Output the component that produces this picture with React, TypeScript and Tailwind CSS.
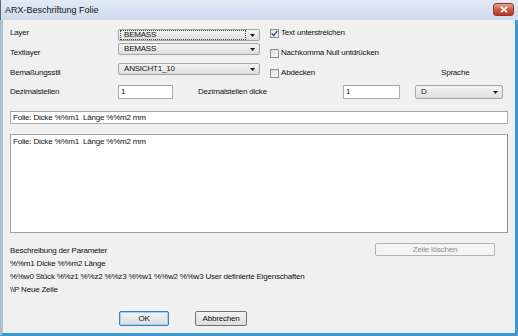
import React from "react";

const Arrow = () => (
  <svg width="5" height="3" viewBox="0 0 5 3" className="shrink-0">
    <path d="M0 0h5L2.5 3z" fill="#1b1b1b" />
  </svg>
);

const Combo = ({ value, className = "", focus = false }: { value: string; className?: string; focus?: boolean }) => (
  <div
    className={
      "flex items-center rounded-[2px] border border-[#a5a5a5] bg-gradient-to-b from-[#f4f4f4] to-[#dedede] pl-[1px] pr-[4px] " +
      className
    }
  >
    <span
      className={
        "flex h-full flex-1 items-center pl-[3px] mr-[4px] " +
        (focus ? "border border-dotted border-[#444]" : "border border-transparent")
      }
    >
      {value}
    </span>
    <Arrow />
  </div>
);

const Check = ({ checked = false, label }: { checked?: boolean; label: string }) => (
  <div className="flex h-5 items-center">
    <div className="flex h-[9px] w-[9px] items-center justify-center border border-[#8e8f8f] bg-gradient-to-br from-[#dcdcdc] to-[#fbfbfb]">
      {checked && (
        <svg width="7" height="7" viewBox="0 0 7 7">
          <path d="M0.8 3.6 L2.7 5.6 L6.3 0.8" stroke="#3d5a9a" strokeWidth="1.4" fill="none" />
        </svg>
      )}
    </div>
    <span className="ml-[2px]">{label}</span>
  </div>
);

const Input = ({ value = "", className = "" }: { value?: string; className?: string }) => (
  <div className={"flex items-center border border-[#abadb3] border-t-[#a0a4ab] bg-white pl-[2px] " + className}>{value}</div>
);

const Btn = ({ children, className = "" }: { children: React.ReactNode; className?: string }) => (
  <div
    className={
      "flex items-center justify-center rounded-[2px] border bg-gradient-to-b from-[#f3f3f3] to-[#dddddd] " + className
    }
  >
    {children}
  </div>
);

export default function App() {
  return (
    <div className="flex h-[336px] w-[518px] flex-col overflow-hidden bg-[#c9d8ea] font-['Liberation_Sans',Arial,sans-serif] text-[8px] tracking-[-0.2px] text-[#111]">
      {/* Titelleiste */}
      <div className="flex h-[20px] shrink-0 items-start justify-between border-l border-[#5b6878] bg-gradient-to-b from-[#e1eaf5] to-[#cddbec]">
        <span className="ml-[4px] mt-[4px] text-[9px] tracking-normal text-[#151515]">ARX-Beschriftung Folie</span>
        <div className="mr-[4px] mt-[3px] flex h-[13px] w-[21px] items-center justify-center rounded-[3px] border border-[#8a3a2f] bg-gradient-to-b from-[#e8a093] via-[#cf5a45] to-[#b8341f]">
          <svg width="8" height="7" viewBox="0 0 8 7">
            <path d="M1 0.8 L7 6.2 M7 0.8 L1 6.2" stroke="#ffffff" strokeWidth="1.8" />
          </svg>
        </div>
      </div>

      {/* Inhalt */}
      <div className="flex flex-1 border-l-[3px] border-r-[3px] border-b-[3px] border-l-[#aebfd4] border-r-[#3b9ad3] border-b-[#3b9ad3]">
        <div className="flex flex-1 flex-col bg-[#f0f0f0] pl-[7px]">
          {/* Obere Zeilen */}
          <div className="mt-[3px] flex">
            <div className="flex w-[108px] flex-col">
              <div className="flex h-5 items-center">Layer</div>
              <div className="flex h-5 items-center">Textlayer</div>
              <div className="flex h-5 items-center">Bemaßungsstil</div>
            </div>
            <div className="flex w-[142px] flex-col pt-[6px]">
              <Combo value="BEMASS" focus className="h-[12px]" />
              <Combo value="BEMASS" className="mt-[2px] h-[12px]" />
              <Combo value="ANSICHT1_10" className="mt-[8px] h-[12px]" />
            </div>
            <div className="ml-[10px] flex flex-col">
              <Check checked label="Text unterstreichen" />
              <Check label="Nachkomma Null untdrücken" />
              <div className="flex">
                <div className="w-[171px]">
                  <Check label="Abdecken" />
                </div>
                <div className="flex h-5 items-center">Sprache</div>
              </div>
            </div>
          </div>

          <div className="mt-[2px] flex h-[14px] items-center">
            <span className="w-[108px]">Dezimalstellen</span>
            <Input value="1" className="h-[14px] w-[55px]" />
            <span className="ml-[25px] w-[145px]">Dezimalstellen dicke</span>
            <Input value="1" className="h-[14px] w-[57px]" />
            <Combo value="D" className="ml-[15px] h-[14px] w-[88px]" />
          </div>

          <Input value="Folie: Dicke %%m1  Länge %%m2 mm" className="mt-[12px] h-[13px] w-[498px] whitespace-pre" />

          <div className="mt-[10px] h-[99px] w-[498px] whitespace-pre border border-[#a0a0a0] border-r-[#8a8a8a] bg-white px-[2px] pt-[1px] leading-[11px]">
            Folie: Dicke %%m1  Länge %%m2 mm
          </div>

          <div className="mt-[10px] flex items-start">
            <div className="mt-[1px] flex w-[365px] flex-col whitespace-nowrap leading-[13px]">
              <span>Beschreibung der Parameter</span>
              <span>%%m1 Dicke %%m2 Länge</span>
              <span>%%w0 Stück %%z1 %%z2 %%z3 %%w1 %%w2 %%w3 User definierte Eigenschaften</span>
              <span>\\P Neue Zeile</span>
            </div>
            <Btn className="h-[13px] w-[120px] border-[#adb2b5] from-[#f4f4f4] to-[#f4f4f4] text-[#8d8d8d]">Zeile löschen</Btn>
          </div>

          <div className="mt-[15px] flex">
            <Btn className="ml-[109px] h-[15px] w-[50px] border-[#3c7fb1] shadow-[inset_0_0_0_1px_#9fd2f0]">OK</Btn>
            <Btn className="ml-[26px] h-[15px] w-[52px] border-[#707070]">Abbrechen</Btn>
          </div>
        </div>
      </div>
    </div>
  );
}
